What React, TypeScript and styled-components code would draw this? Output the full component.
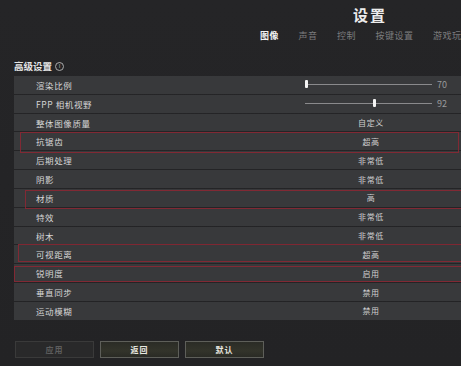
import React from "react";
import styled, { createGlobalStyle } from "styled-components";

const Global = createGlobalStyle`
  html, body { margin: 0; padding: 0; background: #232325; }
  body { width: 461px; height: 366px; overflow: hidden; font-family: "Noto Sans CJK SC", "Noto Sans", sans-serif; }
`;

const Page = styled.div`
  width: 461px;
  height: 366px;
  background: linear-gradient(180deg, #252527 0%, #232325 100%);
  display: flex;
  flex-direction: column;
  overflow: hidden;
`;

const Header = styled.div`
  display: flex;
  flex-direction: column;
  padding-top: 5px;
`;

const Title = styled.div`
  padding-left: 353px;
  font-size: 15px;
  font-weight: 700;
  color: #ececec;
  letter-spacing: 2px;
  line-height: 20px;
`;

const Tabs = styled.div`
  display: flex;
  gap: 19.5px;
  padding-left: 260px;
  margin-top: 4px;
  white-space: nowrap;
`;

const Tab = styled.div<{ $active?: boolean }>`
  font-size: 9px;
  line-height: 14px;
  font-weight: ${(p) => (p.$active ? 700 : 400)};
  color: ${(p) => (p.$active ? "#f2f2f2" : "#7c7c7e")};
  letter-spacing: 0.5px;
`;

const SectionTitle = styled.div`
  display: flex;
  align-items: center;
  gap: 3px;
  padding-left: 14px;
  margin-top: 17px;
  font-size: 9.5px;
  line-height: 12px;
  font-weight: 700;
  color: #e6e6e6;
`;

const Info = styled.span`
  display: inline-flex;
  align-items: center;
  justify-content: center;
  width: 7px;
  height: 7px;
  border: 1px solid #aaa;
  border-radius: 50%;
  font-size: 6px;
  color: #aaa;
  font-weight: 400;
`;

const Table = styled.div`
  display: flex;
  flex-direction: column;
  gap: 1px;
  padding-left: 14px;
  margin-top: 4px;
`;

type Mark = { l: number; t: number; r: number; b: number };

const Row = styled.div<{ $mark?: Mark }>`
  position: relative;
  height: 17.83px;
  background: #38393b;
  display: grid;
  grid-template-columns: 268px 1fr;
  align-items: center;
  &::after {
    content: "";
    display: ${(p) => (p.$mark ? "block" : "none")};
    position: absolute;
    z-index: 1;
    left: ${(p) => p.$mark?.l ?? 0}px;
    top: ${(p) => p.$mark?.t ?? 0}px;
    right: ${(p) => p.$mark?.r ?? 0}px;
    bottom: ${(p) => p.$mark?.b ?? 0}px;
    border: 1.5px solid rgba(138, 40, 52, 0.9);
    pointer-events: none;
  }
`;

const Label = styled.div`
  padding-left: 22px;
  font-size: 8.5px;
  color: #d6d6d6;
  letter-spacing: 0.6px;
  white-space: nowrap;
`;

const Value = styled.div`
  text-align: center;
  font-size: 8px;
  color: #d0d0d0;
  letter-spacing: 0.6px;
  padding-right: 1px;
`;

const SliderWrap = styled.div`
  display: flex;
  align-items: center;
  padding-left: 23px;
`;

const Track = styled.div`
  position: relative;
  width: 127px;
  height: 1px;
  background: #8a8a8c;
`;

const Thumb = styled.div`
  position: absolute;
  top: -4px;
  width: 3px;
  height: 8px;
  background: #f4f4f4;
  border-radius: 1px;
`;

const SliderValue = styled.div`
  margin-left: 5px;
  font-size: 9px;
  color: #9a9a9c;
`;

const Buttons = styled.div`
  display: flex;
  gap: 6px;
  padding-left: 15px;
  margin-top: 21px;
`;

const Button = styled.div<{ $disabled?: boolean }>`
  width: 77px;
  height: 15px;
  display: flex;
  align-items: center;
  justify-content: center;
  font-size: 8px;
  font-weight: 700;
  letter-spacing: 1px;
  border: 1px solid ${(p) => (p.$disabled ? "#3a3a3a" : "#5e5f5a")};
  background: ${(p) =>
    p.$disabled
      ? "#29292a"
      : "linear-gradient(180deg, #2b2c26 0%, #33342b 60%, #2a2b25 100%)"};
  color: ${(p) => (p.$disabled ? "#5d5d5d" : "#e8e8e0")};
`;

type Item =
  | { label: string; value: string; mark?: Mark }
  | { label: string; slider: number; pos: number; mark?: Mark };

const items: Item[] = [
  { label: "渲染比例", slider: 70, pos: 0 },
  { label: "FPP 相机视野", slider: 92, pos: 68 },
  { label: "整体图像质量", value: "自定义" },
  { label: "抗锯齿", value: "超高", mark: { l: 6, t: 0, r: 2, b: -3 } },
  { label: "后期处理", value: "非常低" },
  { label: "阴影", value: "非常低" },
  { label: "材质", value: "高", mark: { l: 11, t: 1, r: -2, b: -2 } },
  { label: "特效", value: "非常低" },
  { label: "树木", value: "非常低" },
  { label: "可视距离", value: "超高", mark: { l: 4, t: -1, r: -2, b: 1 } },
  { label: "锐明度", value: "启用", mark: { l: 0, t: 2, r: -2, b: 0 } },
  { label: "垂直同步", value: "禁用" },
  { label: "运动模糊", value: "禁用" },
];

export default function App() {
  return (
    <Page>
      <Global />
      <Header>
        <Title>设置</Title>
        <Tabs>
          <Tab $active>图像</Tab>
          <Tab>声音</Tab>
          <Tab>控制</Tab>
          <Tab>按键设置</Tab>
          <Tab>游戏玩法</Tab>
        </Tabs>
      </Header>
      <SectionTitle>
        高级设置 <Info>i</Info>
      </SectionTitle>
      <Table>
        {items.map((it) => (
          <Row key={it.label} $mark={it.mark}>
            <Label>{it.label}</Label>
            {"slider" in it ? (
              <SliderWrap>
                <Track>
                  <Thumb style={{ left: `${it.pos}px` }} />
                </Track>
                <SliderValue>{it.slider}</SliderValue>
              </SliderWrap>
            ) : (
              <Value>{it.value}</Value>
            )}
          </Row>
        ))}
      </Table>
      <Buttons>
        <Button $disabled>应用</Button>
        <Button>返回</Button>
        <Button>默认</Button>
      </Buttons>
    </Page>
  );
}
